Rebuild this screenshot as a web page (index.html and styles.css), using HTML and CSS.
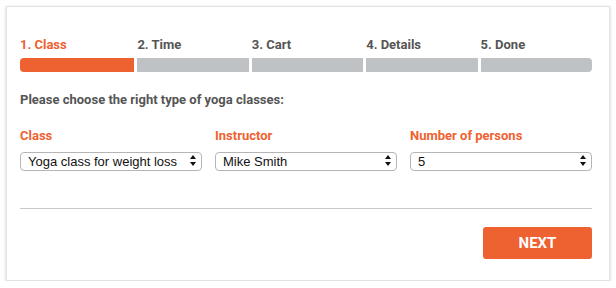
FILE: index.html
```html
<!DOCTYPE html>
<html>
  <head>
    <title>Yoga Booking</title>
    <link rel="stylesheet" href="styles.css">
  </head>
  <body>
    <div class="card">
      <div class="steps">
        <div class="step active">
          <div class="step-label">1. Class</div>
          <div class="step-bar"></div>
        </div>
        <div class="step">
          <div class="step-label">2. Time</div>
          <div class="step-bar"></div>
        </div>
        <div class="step">
          <div class="step-label">3. Cart</div>
          <div class="step-bar"></div>
        </div>
        <div class="step">
          <div class="step-label">4. Details</div>
          <div class="step-bar"></div>
        </div>
        <div class="step">
          <div class="step-label">5. Done</div>
          <div class="step-bar"></div>
        </div>
      </div>

      <p class="intro">Please choose the right type of yoga classes:</p>

      <div class="fields">
        <div class="field">
          <label for="classSelect">Class</label>
          <div class="select-wrap">
            <select id="classSelect">
              <option>Yoga class for weight loss</option>
            </select>
            <svg class="arrows" width="6" height="11" viewBox="0 0 6 11">
              <path d="M3 0 L6 4 L0 4 Z M0 7 L6 7 L3 11 Z" fill="#111"/>
            </svg>
          </div>
        </div>
        <div class="field">
          <label for="instructorSelect">Instructor</label>
          <div class="select-wrap">
            <select id="instructorSelect">
              <option>Mike Smith</option>
            </select>
            <svg class="arrows" width="6" height="11" viewBox="0 0 6 11">
              <path d="M3 0 L6 4 L0 4 Z M0 7 L6 7 L3 11 Z" fill="#111"/>
            </svg>
          </div>
        </div>
        <div class="field">
          <label for="personsSelect">Number of persons</label>
          <div class="select-wrap">
            <select id="personsSelect">
              <option>5</option>
            </select>
            <svg class="arrows" width="6" height="11" viewBox="0 0 6 11">
              <path d="M3 0 L6 4 L0 4 Z M0 7 L6 7 L3 11 Z" fill="#111"/>
            </svg>
          </div>
        </div>
      </div>

      <hr class="divider">

      <div class="actions">
        <button class="next-button">NEXT</button>
      </div>
    </div>
  </body>
</html>
```

FILE: styles.css
```css
body {
  margin: 0;
  padding: 6px 6px 0 6px;
  background-color: white;
  font-family: Roboto, "Liberation Sans", Arial, sans-serif;
}
.card {
  height: 275px;
  box-sizing: border-box;
  padding: 30px 17px 0 13px;
  border: 1px solid #e2e2e2;
  box-shadow: 0 1px 3px rgba(0, 0, 0, 0.2);
  background-color: white;
}
.steps {
  display: grid;
  grid-template-columns: repeat(5, 1fr);
}
.step + .step {
  padding-left: 3px;
}
.step-label {
  font-size: 13px;
  line-height: 16px;
  font-weight: bold;
  color: #555;
}
.step-bar {
  margin-top: 5px;
  height: 14px;
  background-color: #bec2c5;
}
.step:first-child .step-bar {
  border-radius: 4px 0 0 4px;
}
.step:last-child .step-bar {
  border-radius: 0 4px 4px 0;
}
.step.active .step-label {
  color: #ee6131;
}
.step.active .step-bar {
  background-color: #ee6131;
}
.intro {
  margin: 20px 0 0 0;
  font-size: 13px;
  line-height: 16px;
  font-weight: bold;
  color: #555;
}
.fields {
  display: grid;
  grid-template-columns: repeat(3, 1fr);
  gap: 13px;
  margin-top: 20px;
}
.field label {
  display: block;
  font-size: 13px;
  line-height: 16px;
  font-weight: bold;
  color: #ee6131;
  margin-bottom: 7px;
}
.select-wrap {
  position: relative;
}
select {
  appearance: none;
  -webkit-appearance: none;
  width: 100%;
  height: 19px;
  padding: 0 16px 0 7px;
  border: 1px solid #b5b5b5;
  border-radius: 4px;
  background-color: white;
  font-family: "Liberation Sans", Arial, sans-serif;
  font-size: 13px;
  color: #111;
}
.arrows {
  position: absolute;
  right: 6px;
  top: 4px;
}
.divider {
  margin: 37px 0 0 0;
  border: none;
  border-top: 1px solid #c8c8c8;
}
.actions {
  display: flex;
  justify-content: flex-end;
  margin-top: 18px;
}
.next-button {
  width: 109px;
  height: 32px;
  padding: 0;
  background-color: #ee6131;
  color: white;
  border: none;
  border-radius: 3px;
  font-family: Roboto, "Liberation Sans", Arial, sans-serif;
  font-size: 15px;
  font-weight: bold;
  cursor: pointer;
}
```
